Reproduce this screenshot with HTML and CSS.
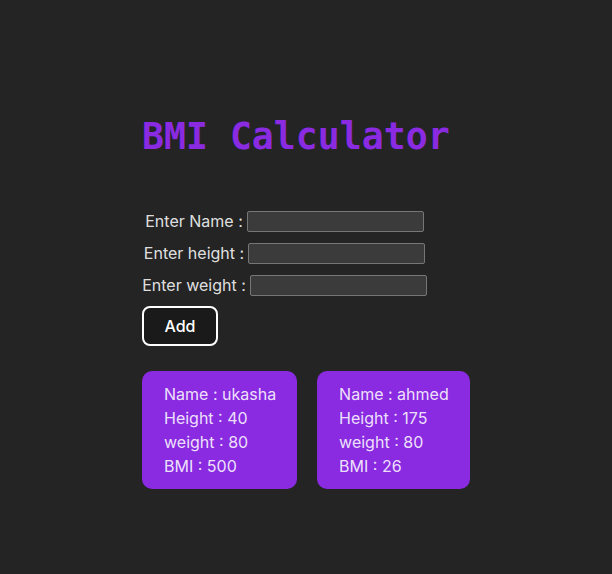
FILE: index.html
```html
<!DOCTYPE html>
<html>
<head>
<meta charset="utf-8">
<link rel="stylesheet" href="styles.css">
</head>
<body>
<div class="app">
  <h1 class="title">BMI Calculator</h1>
  <div class="form">
    <div class="row"><label>Enter Name : </label><input class="field" type="text"></div>
    <div class="row"><label>Enter height : </label><input class="field" type="text"></div>
    <div class="row"><label>Enter weight : </label><input class="field" type="text"></div>
  </div>
  <button class="add">Add</button>
  <div class="cards">
    <div class="card">
      <div>Name : ukasha</div>
      <div>Height : 40</div>
      <div>weight : 80</div>
      <div>BMI : 500</div>
    </div>
    <div class="card">
      <div>Name : ahmed</div>
      <div>Height : 175</div>
      <div>weight : 80</div>
      <div>BMI : 26</div>
    </div>
  </div>
</div>
</body>
</html>
```
FILE: styles.css
```css
html, body {
  margin: 0;
  padding: 0;
  background: #242424;
  color: rgba(255, 255, 255, 0.87);
  font-family: Inter, "Noto Sans", sans-serif;
  font-size: 16px;
  line-height: 24px;
}
.app {
  padding: 109px 0 0 142px;
}
.title {
  margin: 0;
  font-family: "DejaVu Sans Mono", monospace;
  font-weight: bold;
  font-size: 36.5px;
  line-height: 56px;
  color: #8a2be2;
}
.form {
  margin-top: 40px;
  width: 285px;
  text-align: center;
}
.row {
  height: 32px;
  display: flex;
  justify-content: center;
  align-items: center;
  gap: 4px;
}
.field {
  box-sizing: border-box;
  width: 177px;
  height: 21px;
  margin: 0;
  background: #3b3b3b;
  border: 1px solid #767676;
  border-radius: 2px;
}
.add {
  margin-top: 5px;
  box-sizing: border-box;
  width: 76px;
  height: 40px;
  background: #1a1a1a;
  color: #fff;
  border: 2px solid #fff;
  border-radius: 8px;
  font-family: Inter, sans-serif;
  font-size: 16px;
  font-weight: 500;
  cursor: pointer;
}
.cards {
  margin-top: 25px;
  display: flex;
  gap: 20px;
}
.card {
  background: #8a2be2;
  border-radius: 10px;
  padding: 11px 21px 11px 22px;
  height: 118px;
  box-sizing: border-box;
}
```
